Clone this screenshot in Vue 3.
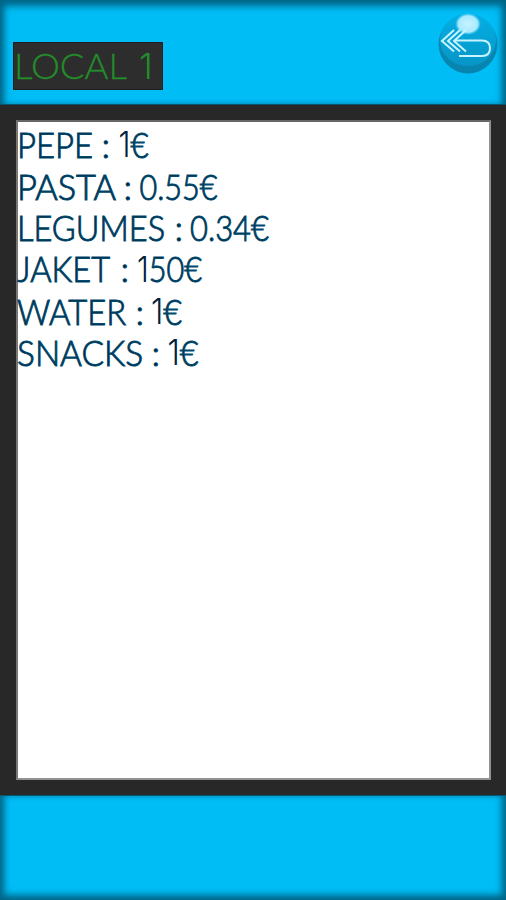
<script setup>
const items = [
  { name: 'PEPE', price: '1€', w: 76, colon: 101.5, x: 118.500, pw: 30 },
  { name: 'PASTA', price: '0.55€', w: 99, colon: 123.5, x: 139.500, pw: 78 },
  { name: 'LEGUMES', price: '0.34€', w: 148, colon: 174.5, x: 190, pw: 79 },
  { name: 'JAKET', price: '150€', w: 93, colon: 120.5, x: 137, pw: 65 },
  { name: 'WATER', price: '1€', w: 109, colon: 135.5, x: 151, pw: 31 },
  { name: 'SNACKS', price: '1€', w: 126, colon: 151.5, x: 167.500, pw: 31 }
].map((item) => ({
  ...item,
  one: item.price.startsWith('1') ? '1' : '',
  rest: item.price.replace(/^1/, '')
}))
</script>

<template>
  <div class="screen">
    <header class="bar top">
      <div class="title">
        <svg width="148" height="46" viewBox="0 0 148 46">
          <text x="0" y="36" textLength="113" lengthAdjust="spacingAndGlyphs">LOCAL</text>
          <text class="one" x="125" y="36">1</text>
        </svg>
      </div>
      <button class="back" aria-label="Back">
        <svg width="62" height="64" viewBox="0 0 62 64">
          <defs>
            <linearGradient id="ball" x1="0" y1="0" x2="0" y2="1">
              <stop offset="0" stop-color="#04ade4" />
              <stop offset="0.5" stop-color="#05a3d5" />
              <stop offset="1" stop-color="#0795c6" />
            </linearGradient>
            <linearGradient id="rim" x1="0" y1="0" x2="0" y2="1">
              <stop offset="0" stop-color="#04a8dc" />
              <stop offset="0.4" stop-color="#0789b5" />
              <stop offset="1" stop-color="#0784ae" />
            </linearGradient>
            <radialGradient id="shine">
              <stop offset="0" stop-color="#c8f3ff" />
              <stop offset="0.75" stop-color="#a8eaff" />
              <stop offset="1" stop-color="#63d4fa" stop-opacity="0" />
            </radialGradient>
          </defs>
          <circle cx="31" cy="33" r="29.5" fill="url(#rim)" />
          <ellipse cx="31" cy="29" rx="28" ry="26" fill="url(#ball)" />
          <ellipse cx="31" cy="13" rx="13" ry="11" fill="url(#shine)" />
          <g class="arrow">
            <path d="M17 19 L5 30 L17 40.500" />
            <path d="M23 19 L11 30 L23 40.500" />
            <path d="M29 19 L17 30 L29 40.500" />
            <path d="M18 29.500 H45 Q53 29.500 53 37 Q53 45 45 45 H22" />
          </g>
        </svg>
      </button>
    </header>
    <main class="middle">
      <div class="list">
        <svg v-for="item in items" :key="item.name" class="row" width="471" height="41.700" viewBox="0 0 471 41.700">
          <g transform="translate(-18 0)">
            <text x="17" y="34.500" :textLength="item.w" lengthAdjust="spacingAndGlyphs">{{ item.name }}</text>
            <text :x="item.colon" y="34.500">:</text>
            <text :x="item.x" y="34.500" :textLength="item.pw" lengthAdjust="spacingAndGlyphs"><tspan v-if="item.one" class="one">{{ item.one }}</tspan>{{ item.rest }}</text>
          </g>
        </svg>
      </div>
    </main>
    <footer class="bar bottom"></footer>
  </div>
</template>

<style>
body { margin: 0; }
</style>

<style scoped>
.screen {
  width: 506px;
  height: 900px;
  display: flex;
  flex-direction: column;
  background: #282828;
  overflow: hidden;
  font-family: Lato, "Liberation Sans", sans-serif;
}
.bar {
  box-sizing: border-box;
  background: #00bdf5;
}
.top {
  height: 105px;
  display: flex;
  justify-content: space-between;
  padding: 42px 7px 0 13px;
  box-shadow: inset 0 7px 7px -1px #006688, inset 7px 0 7px -3px #006688, inset -7px 0 7px -3px #006688;
  border-bottom: 1px solid #075773;
}
.bottom {
  height: 105px;
  box-shadow: inset 0 -7px 7px -2px #006688, inset 7px 0 7px -3px #006688, inset -7px 0 7px -3px #006688;
  border-top: 1px solid #075773;
}
.title {
  box-sizing: border-box;
  width: 150px;
  height: 48px;
  border: 1px solid #231b1c;
  background: #2d2d2d;
}
.title svg {
  display: block;
  overflow: visible;
}
.title text {
  font-size: 36px;
  font-weight: 300;
  fill: #238c2b;
  stroke: #238c2b;
  stroke-width: 0.3px;
}
.back {
  width: 62px;
  height: 64px;
  margin-top: -31px;
  padding: 0;
  border: 0;
  background: none;
}
.back svg { display: block; }
.arrow {
  fill: none;
  stroke: #c9f4ff;
  stroke-width: 2px;
}
.middle {
  box-sizing: border-box;
  height: 690px;
  padding: 15px 15px 15px 16px;
}
.list {
  box-sizing: border-box;
  height: 660px;
  padding-top: 1px;
  border: 2px solid #929292;
  border-top-color: #686868;
  border-left-color: #777;
  background: #fff;
}
.row {
  display: block;
  overflow: visible;
}
.row text {
  font-size: 36px;
  font-weight: 300;
  fill: #002038;
  stroke: #004a6e;
  stroke-width: 1px;
}
.title .one,
.row .one {
  font-family: Inter, "Liberation Sans", sans-serif;
  font-size: 35px;
  stroke-width: 0;
}
</style>
